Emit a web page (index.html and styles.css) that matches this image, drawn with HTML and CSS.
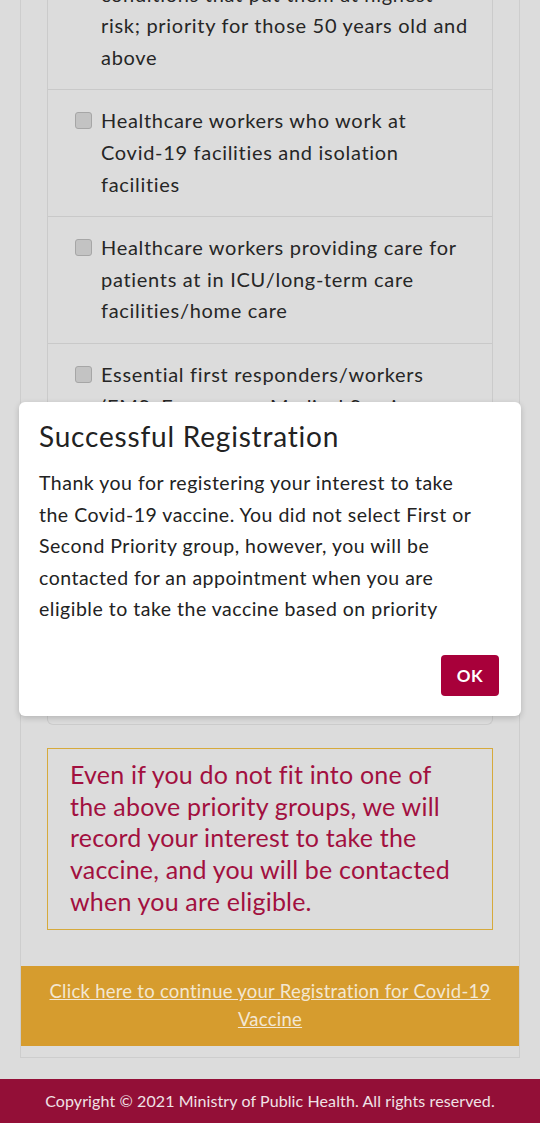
FILE: index.html
```html
<!DOCTYPE html>
<html lang="en">
<head>
<meta charset="utf-8">
<meta name="viewport" content="width=device-width, initial-scale=1">
<title>Covid-19 Vaccine Registration</title>
<link rel="stylesheet" href="styles.css">
</head>
<body>
<main class="page">
  <section class="card">
    <div class="card-body">
      <ul class="groups">
        <li class="group">
          <span class="check"></span>
          <span class="label">Adults with serious chronic medical conditions that put them at highest risk; priority for those 50 years old and above</span>
        </li>
        <li class="group">
          <span class="check"></span>
          <span class="label">Healthcare workers who work at Covid-19 facilities and isolation facilities</span>
        </li>
        <li class="group">
          <span class="check"></span>
          <span class="label">Healthcare workers providing care for patients at in ICU/long-term care facilities/home care</span>
        </li>
        <li class="group">
          <span class="check"></span>
          <span class="label">Essential first responders/workers (EMS, Emergency Medical Services, Civil Defence, Police and other frontline workers) who are in close contact with the public</span>
        </li>
        <li class="group">
          <span class="check"></span>
          <span class="label">Teachers and school staff, staff of nurseries and childcare centres, and other essential workers at increased risk of exposure to the virus</span>
        </li>
      </ul>
      <div class="notice">Even if you do not fit into one of the above priority groups, we will record your interest to take the vaccine, and you will be contacted when you are eligible.</div>
    </div>
    <div class="continue"><a href="#">Click here to continue your Registration for Covid-19 Vaccine</a></div>
  </section>
</main>
<footer class="footer">Copyright © 2021 Ministry of Public Health. All rights reserved.</footer>

<div class="modal" role="dialog">
  <h2 class="modal-title">Successful Registration</h2>
  <p class="modal-text">Thank you for registering your interest to take the Covid-19 vaccine. You did not select First or Second Priority group, however, you will be contacted for an appointment when you are eligible to take the vaccine based on priority</p>
  <div class="modal-actions"><button class="ok">OK</button></div>
</div>
</body>
</html>
```
FILE: styles.css
```css
html, body {
  margin: 0;
  padding: 0;
}
body {
  background: #dcdcdc;
  font-family: Lato, "Noto Sans", sans-serif;
  color: #262626;
  height: 1123px;
  overflow: hidden;
  position: relative;
}
.page {
  padding: 0 20px;
  margin-top: -68px;
}
.card {
  border: 1px solid #cdcdcd;
  border-top: none;
  background: #dcdcdc;
}
.card-body {
  padding: 0 26px 36px;
}
.groups {
  list-style: none;
  margin: 0;
  padding: 0;
  border: 1px solid #cbcbcb;
  border-top: none;
  border-radius: 0 0 6px 6px;
}
.group {
  display: flex;
  gap: 9px;
  padding: 15px 20px 16px 27px;
  border-bottom: 1px solid #c9c9c9;
  font-size: 20px;
  line-height: 31.6px;
  letter-spacing: 0.7px;
}
.group:last-child {
  border-bottom: none;
  padding-bottom: 49px;
}
.check {
  flex: none;
  width: 15px;
  height: 15px;
  margin-top: 7px;
  background: #c3c3c3;
  border: 1px solid #a6a6a6;
  border-radius: 3px;
}
.label {
  flex: 1;
}
.notice {
  margin-top: 23px;
  border: 1px solid #d6aa3c;
  padding: 10px 20px 12px 22px;
  color: #a2103f;
  font-size: 25px;
  line-height: 31.6px;
  letter-spacing: 0.2px;
}
.continue {
  background: #d69c2e;
  text-align: center;
  padding: 11px 24px 13px;
  margin-bottom: 11px;
  font-size: 18.5px;
  line-height: 28px;
  letter-spacing: 0.25px;
}
.continue a {
  color: #f3e7d2;
}
.footer {
  margin-top: 21px;
  background: #930f37;
  color: #f0e2e6;
  text-align: center;
  font-size: 16px;
  letter-spacing: 0.1px;
  height: 44px;
  line-height: 44px;
}
.modal {
  position: absolute;
  left: 19px;
  top: 402px;
  width: 446px;
  height: 277px;
  background: #ffffff;
  border-radius: 6px;
  box-shadow: 0 2px 6px rgba(0, 0, 0, 0.18);
  padding: 17px 36px 20px 20px;
  color: #222222;
}
.modal-title {
  margin: 0;
  font-weight: 400;
  font-size: 28px;
  line-height: 34px;
  letter-spacing: 0.8px;
}
.modal-text {
  margin: 14px 0 0;
  font-size: 19.5px;
  line-height: 31.6px;
  letter-spacing: 0.5px;
}
.modal-actions {
  display: flex;
  justify-content: flex-end;
  margin-top: 30px;
  margin-right: -14px;
}
.ok {
  background: #a8003a;
  color: #ffffff;
  border: none;
  border-radius: 4px;
  font-family: Lato, "Noto Sans", sans-serif;
  font-weight: 700;
  font-size: 17px;
  letter-spacing: 0.5px;
  width: 58px;
  height: 41px;
  padding: 0;
}
```
